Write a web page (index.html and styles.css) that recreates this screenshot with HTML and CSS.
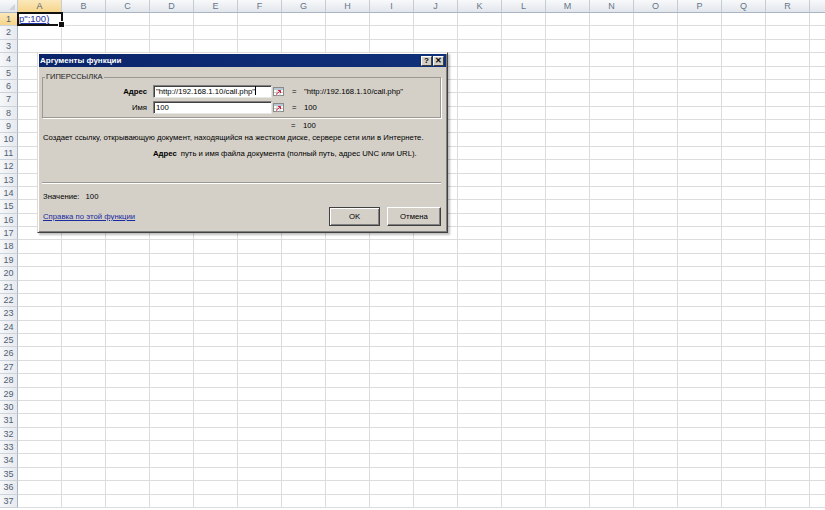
FILE: index.html
```html
<!DOCTYPE html>
<html lang="ru">
<head>
<meta charset="utf-8">
<title>Аргументы функции</title>
<link rel="stylesheet" href="styles.css">
</head>
<body>
<div class="sheet">
  <div class="colheads">
    <div class="corner"></div>
    <div class="ch sel">A</div><div class="ch">B</div><div class="ch">C</div><div class="ch">D</div><div class="ch">E</div><div class="ch">F</div><div class="ch">G</div><div class="ch">H</div><div class="ch">I</div><div class="ch">J</div><div class="ch">K</div><div class="ch">L</div><div class="ch">M</div><div class="ch">N</div><div class="ch">O</div><div class="ch">P</div><div class="ch">Q</div><div class="ch">R</div><div class="ch"></div>
  </div>
  <div class="row"><span class="rh sel">1</span><div class="cells"><div class="a1">p";100)</div></div></div>
  <div class="row"><span class="rh">2</span><div class="cells"></div></div>
  <div class="row"><span class="rh">3</span><div class="cells"></div></div>
  <div class="row"><span class="rh">4</span><div class="cells"></div></div>
  <div class="row"><span class="rh">5</span><div class="cells"></div></div>
  <div class="row"><span class="rh">6</span><div class="cells"></div></div>
  <div class="row"><span class="rh">7</span><div class="cells"></div></div>
  <div class="row"><span class="rh">8</span><div class="cells"></div></div>
  <div class="row"><span class="rh">9</span><div class="cells"></div></div>
  <div class="row"><span class="rh">10</span><div class="cells"></div></div>
  <div class="row"><span class="rh">11</span><div class="cells"></div></div>
  <div class="row"><span class="rh">12</span><div class="cells"></div></div>
  <div class="row"><span class="rh">13</span><div class="cells"></div></div>
  <div class="row"><span class="rh">14</span><div class="cells"></div></div>
  <div class="row"><span class="rh">15</span><div class="cells"></div></div>
  <div class="row"><span class="rh">16</span><div class="cells"></div></div>
  <div class="row"><span class="rh">17</span><div class="cells"></div></div>
  <div class="row"><span class="rh">18</span><div class="cells"></div></div>
  <div class="row"><span class="rh">19</span><div class="cells"></div></div>
  <div class="row"><span class="rh">20</span><div class="cells"></div></div>
  <div class="row"><span class="rh">21</span><div class="cells"></div></div>
  <div class="row"><span class="rh">22</span><div class="cells"></div></div>
  <div class="row"><span class="rh">23</span><div class="cells"></div></div>
  <div class="row"><span class="rh">24</span><div class="cells"></div></div>
  <div class="row"><span class="rh">25</span><div class="cells"></div></div>
  <div class="row"><span class="rh">26</span><div class="cells"></div></div>
  <div class="row"><span class="rh">27</span><div class="cells"></div></div>
  <div class="row"><span class="rh">28</span><div class="cells"></div></div>
  <div class="row"><span class="rh">29</span><div class="cells"></div></div>
  <div class="row"><span class="rh">30</span><div class="cells"></div></div>
  <div class="row"><span class="rh">31</span><div class="cells"></div></div>
  <div class="row"><span class="rh">32</span><div class="cells"></div></div>
  <div class="row"><span class="rh">33</span><div class="cells"></div></div>
  <div class="row"><span class="rh">34</span><div class="cells"></div></div>
  <div class="row"><span class="rh">35</span><div class="cells"></div></div>
  <div class="row"><span class="rh">36</span><div class="cells"></div></div>
  <div class="row"><span class="rh">37</span><div class="cells"></div></div>
</div>

<div class="dlg">
  <div class="title">
    <span class="ttext">Аргументы функции</span>
    <div class="tbtns"><span class="tb">?</span><span class="tb">✕</span></div>
  </div>
  <div class="dbody">
    <fieldset class="group">
      <legend>ГИПЕРССЫЛКА</legend>
      <div class="arg">
        <span class="lbl strong">Адрес</span>
        <span class="inp">"http://192.168.1.10/call.php"<i class="caret"></i></span>
        <span class="ref"><svg width="11" height="9" viewBox="0 0 11 9"><rect x="0.5" y="0.5" width="10" height="8" fill="#fff" stroke="#8a8a8a"/><rect x="1" y="1" width="9" height="2" fill="#b9c6d8"/><path d="M1 5.5h9M4 3v5.5M7 3v5.5" stroke="#c8c8c8"/><path d="M3 7.5L7.5 3.5M5 3.5h2.5v2.5" stroke="#d2203a" fill="none"/></svg></span>
        <span class="eq">=</span>
        <span class="val">"http://192.168.1.10/call.php"</span>
      </div>
      <div class="arg">
        <span class="lbl">Имя</span>
        <span class="inp">100</span>
        <span class="ref"><svg width="11" height="9" viewBox="0 0 11 9"><rect x="0.5" y="0.5" width="10" height="8" fill="#fff" stroke="#8a8a8a"/><rect x="1" y="1" width="9" height="2" fill="#b9c6d8"/><path d="M1 5.5h9M4 3v5.5M7 3v5.5" stroke="#c8c8c8"/><path d="M3 7.5L7.5 3.5M5 3.5h2.5v2.5" stroke="#d2203a" fill="none"/></svg></span>
        <span class="eq">=</span>
        <span class="val">100</span>
      </div>
    </fieldset>
    <div class="result"><span class="eq">=</span><span class="val">100</span></div>
    <p class="desc">Создает ссылку, открывающую документ, находящийся на жестком диске, сервере сети или в Интернете.</p>
    <p class="argdesc"><b>Адрес</b><span>путь и имя файла документа (полный путь, адрес UNC или URL).</span></p>
    <div class="sep"></div>
    <div class="value">Значение:<span>100</span></div>
    <div class="foot">
      <a class="help" href="#">Справка по этой функции</a>
      <div class="btns"><button class="btn def">OK</button><button class="btn">Отмена</button></div>
    </div>
  </div>
</div>
</body>
</html>
```

FILE: styles.css
```css
* { box-sizing: border-box; margin: 0; padding: 0; }
html, body { width: 825px; height: 510px; overflow: hidden; }
body { background: #fff; font-family: "Liberation Sans", Arial, sans-serif; position: relative; }

.sheet { display: flex; flex-direction: column; }
.colheads {
  display: flex; height: 13px; flex: none;
  background: linear-gradient(#f8f9fb, #e2e6eb);
  border-bottom: 1px solid #a9b5c4;
}
.corner { width: 18px; flex: none; border-right: 1px solid #c3cad3; position: relative; }
.corner::after {
  content: ""; position: absolute; right: 2px; bottom: 2px;
  border-style: solid; border-width: 0 0 6px 6px;
  border-color: transparent transparent #cdd3da transparent;
}
.ch {
  width: 44px; flex: none; border-right: 1px solid #c6ccd4;
  font-size: 9px; line-height: 12px; color: #66768a; text-align: center;
}
.ch.sel { background: linear-gradient(#fbe8bb, #f6d48a); border-bottom: 1px solid #e9b245; margin-bottom: -1px; color: #4f5f74; }

.row { display: flex; height: 13.375px; flex: none; }
.rh {
  width: 18px; flex: none;
  background: linear-gradient(to right, #f6f7f9, #e6e9ee);
  border-right: 1px solid #a9b5c4; border-bottom: 1px solid #cdd3db;
  font-size: 9px; line-height: 12px; color: #4f5f74; text-align: center;
}
.rh.sel { background: linear-gradient(#fbe8bb, #f6d48a); border-right-color: #e9b245; }
.cells {
  flex: 1; border-bottom: 1px solid #dadcdd;
  background: repeating-linear-gradient(to right, transparent 0 43px, #dadcdd 43px 44px);
  position: relative;
}
.a1 {
  width: 44px; height: 100%; padding-left: 1px;
  font-size: 9.5px; line-height: 12px; color: #1f2f9f; text-decoration: underline;
  position: relative; background: #fff;
}
.a1::after {
  content: ""; position: absolute; left: -1px; top: -1px; right: -1px; bottom: -1px;
  border: 2px solid #111;
}
.a1::before {
  content: ""; position: absolute; right: -3px; bottom: -3px; width: 5px; height: 5px;
  background: #111; border: 1px solid #fff; z-index: 1;
}

/* dialog */
.dlg {
  position: absolute; left: 37px; top: 52px; width: 411px; height: 181px;
  background: #d4d0c8; font-size: 7.75px; color: #000;
  border: 1px solid; border-color: #dedbd6 #404040 #404040 #dedbd6;
  box-shadow: inset 1px 1px 0 #fff, inset -1px -1px 0 #808080, 2px 2px 2px rgba(0,0,0,0.25);
  padding: 1px;
  display: flex; flex-direction: column;
}
.title {
  height: 13px; flex: none; background: linear-gradient(to right, #0a246a, #10307a);
  display: flex; align-items: center; justify-content: space-between; padding: 0 2px 0 1px;
}
.ttext { color: #fff; font-weight: bold; font-size: 8px; }
.tbtns { display: flex; gap: 1px; }
.tb {
  width: 11px; height: 10px; background: #d4d0c8;
  border: 1px solid; border-color: #fff #404040 #404040 #fff;
  font-size: 8px; font-weight: bold; line-height: 8px; text-align: center; color: #000;
}
.dbody { flex: 1; padding: 4px 5px 0 3px; display: flex; flex-direction: column; }

.group {
  border: 1px solid #9c9891; box-shadow: 1px 1px 0 #fff;
  height: 45px; padding: 4px 0 0 0; margin-top: 2px;
}
.group legend { font-size: 7.5px; margin-left: 2px; padding: 0 1px; color: #222; line-height: 8px; }
.arg { display: flex; align-items: center; height: 13px; margin-bottom: 3px; }
.lbl { width: 104px; text-align: right; margin-right: 6px; }
.strong { font-weight: bold; }
.inp {
  width: 119px; height: 13px; background: #fff;
  border: 1px solid; border-color: #808080 #e6e6e6 #e6e6e6 #808080;
  box-shadow: inset 1px 1px 0 #404040;
  padding-left: 2px; line-height: 11px; white-space: nowrap; overflow: hidden;
}
.caret { display: inline-block; width: 1px; height: 9px; background: #000; vertical-align: -1px; }
.ref { width: 13px; height: 13px; display: flex; align-items: center; justify-content: center; }
.eq { margin-left: 7px; width: 12px; }

.result { display: flex; padding-left: 249px; margin-top: 3px; height: 10px; line-height: 10px; }
.result .eq { margin-left: 0; }
.desc { margin-top: 2px; line-height: 10px; padding-left: 1px; }
.argdesc { margin-top: 6px; line-height: 10px; padding-left: 111px; }
.argdesc b { margin-right: 4px; }
.sep { height: 2px; border-top: 1px solid #9c9891; border-bottom: 1px solid #fff; margin-top: 23px; }
.value { margin-top: 8px; line-height: 10px; padding-left: 1px; }
.value span { margin-left: 6px; }
.foot { display: flex; justify-content: space-between; align-items: center; margin-top: 5px; padding-left: 1px; }
.help { color: #1a2ca0; text-decoration: underline; }
.btns { display: flex; gap: 7px; }
.btn {
  width: 51px; height: 19px; background: #d4d0c8; font: 7.75px "Liberation Sans", Arial, sans-serif;
  border: 1px solid; border-color: #fff #404040 #404040 #fff;
  box-shadow: inset -1px -1px 0 #808080;
  color: #000;
}
.btn + .btn { width: 54px; }
.btn.def { border-color: #404040; box-shadow: inset 1px 1px 0 #fff, inset -1px -1px 0 #808080; }
```
